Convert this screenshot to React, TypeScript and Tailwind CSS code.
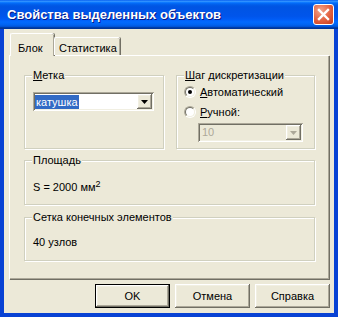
import type { ReactNode } from "react";

const raised =
  "shadow-[inset_-1px_-1px_#716f64,inset_1px_1px_#fff,inset_-2px_-2px_#aca899,inset_2px_2px_#f1efe2]";
const sunken =
  "shadow-[inset_1px_1px_#aca899,inset_-1px_-1px_#fff,inset_2px_2px_#716f64,inset_-2px_-2px_#f1efe2]";

function TitleBar() {
  return (
    <div className="flex h-[29px] shrink-0 items-center justify-between bg-[linear-gradient(to_bottom,#0058ee_0%,#3593ff_4%,#288eff_6%,#127dff_8%,#036ffc_10%,#0262ee_14%,#0057e5_20%,#0054e3_24%,#0055eb_56%,#005bf5_66%,#026afe_76%,#0062ef_86%,#0052d6_92%,#0040ab_94%,#003092_100%)] pl-[7px] pr-[4px]">
      <span className="text-[13px] font-bold leading-none text-white [text-shadow:1px_1px_#0a1883]">
        Свойства выделенных объектов
      </span>
      <div className="flex h-[21px] w-[21px] items-center justify-center rounded-[3px] border border-white bg-[radial-gradient(circle_at_35%_30%,#f3a58c,#e2603f_55%,#c63a1b)]">
        <svg width="13" height="13" viewBox="0 0 13 13">
          <path d="M2 2l9 9M11 2l-9 9" stroke="#fff" strokeWidth="2.4" strokeLinecap="square" />
        </svg>
      </div>
    </div>
  );
}

function Arrow({ color }: { color: string }) {
  return (
    <svg width="7" height="4" viewBox="0 0 7 4">
      <path d="M0 0h7L3.5 4z" fill={color} />
    </svg>
  );
}

function ComboBox({ value, disabled, className }: { value: string; disabled?: boolean; className: string }) {
  return (
    <div className={`flex h-[19px] p-[2px] ${sunken} ${disabled ? "bg-[#ece9d8]" : "bg-white"} ${className}`}>
      <div className="flex flex-1 items-center">
        {disabled ? (
          <span className="pl-[2px] leading-[13px] text-[#aca899]">{value}</span>
        ) : (
          <span className="bg-[#316ac5] pl-[1px] pr-[1px] leading-[14px] text-white">{value}</span>
        )}
      </div>
      <div className={`flex w-[15px] items-center justify-center bg-[#ece9d8] ${raised}`}>
        <Arrow color={disabled ? "#aca899" : "#000"} />
      </div>
    </div>
  );
}

function Radio({ checked, first, rest }: { checked?: boolean; first: string; rest: string }) {
  return (
    <div className="flex h-[16px] items-center gap-[4px]">
      <span className="flex h-[12px] w-[12px] items-center justify-center rounded-full border border-b-white border-l-[#aca899] border-r-white border-t-[#aca899]">
        <span className="flex h-[10px] w-[10px] items-center justify-center rounded-full border border-b-[#f1efe2] border-l-[#716f64] border-r-[#f1efe2] border-t-[#716f64] bg-white">
          {checked && <span className="h-[4px] w-[4px] rounded-full bg-black" />}
        </span>
      </span>
      <span>
        <u>{first}</u>
        {rest}
      </span>
    </div>
  );
}

function Group({ label, className, children }: { label: ReactNode; className: string; children: ReactNode }) {
  return (
    <fieldset
      className={`border border-[#d0d0bf] pl-[7px] shadow-[inset_1px_1px_#fff,1px_1px_#fff] ${className}`}
    >
      <legend className="bg-[#ece9d8] px-[1px] leading-[13px]">{label}</legend>
      {children}
    </fieldset>
  );
}

function Btn({ children, primary }: { children: ReactNode; primary?: boolean }) {
  return (
    <button
      type="button"
      className={`h-[24px] w-[75px] bg-[#ece9d8] text-[11px] ${primary ? "border border-black" : ""}`}
    >
      <span className={`flex h-full w-full items-center justify-center ${raised}`}>{children}</span>
    </button>
  );
}

export default function App() {
  return (
    <div className="flex h-[317px] w-[338px] flex-col overflow-hidden bg-[#0842d4] font-['Liberation_Sans',Arial,sans-serif] text-[11px] text-black">
      <TitleBar />
      <div className="mx-[4px] flex h-[284px] flex-col bg-[#ece9d8]">
        <div className="relative z-10 mt-[4px] flex h-[22px] items-end pl-[6px]">
          <div className="-mb-[1px] h-[23px] w-[44px] rounded-t-[2px] border-l border-t border-white bg-[#ece9d8] pl-[7px] pt-[6px] shadow-[inset_-1px_0_#aca899,1px_0_#716f64]">
            Блок
          </div>
          <div className="h-[18px] w-[66px] rounded-t-[2px] border-l border-t border-white pl-[4px] pt-[2px] shadow-[inset_-1px_0_#aca899,1px_0_#716f64]">
            Статистика
          </div>
        </div>
        <div className="mx-[5px] flex h-[224px] flex-col border-l border-t border-white px-[14px] pt-[13px] shadow-[inset_-1px_-1px_#aca899,1px_1px_#716f64]">
          <div className="flex gap-[12px]">
            <Group
              className="h-[80px] w-[140px] pt-[10px]"
              label={
                <>
                  <u>М</u>етка
                </>
              }
            >
              <ComboBox value="катушка" className="ml-[1px] w-[121px]" />
            </Group>
            <Group
              className="h-[80px] w-[139px] pt-[2px]"
              label={
                <>
                  <u>Ш</u>аг дискретизации
                </>
              }
            >
              <div className="flex flex-col gap-[4px]">
                <Radio checked first="А" rest="втоматический" />
                <Radio first="Р" rest="учной:" />
              </div>
              <ComboBox value="10" disabled className="ml-[14px] mt-[3px] w-[105px]" />
            </Group>
          </div>
          <Group className="mt-[5px] h-[51px] pt-[14px]" label="Площадь">
            <div className="ml-[1px] leading-[13px]">
              S = 2000 мм<sup className="text-[9px]">2</sup>
            </div>
          </Group>
          <Group className="mt-[6px] h-[50px] pt-[12px]" label="Сетка конечных элементов">
            <div className="ml-[1px] leading-[13px]">40 узлов</div>
          </Group>
        </div>
        <div className="mt-[5px] flex justify-end gap-[5px] pr-[4px]">
          <Btn primary>OK</Btn>
          <Btn>Отмена</Btn>
          <Btn>Справка</Btn>
        </div>
      </div>
    </div>
  );
}
